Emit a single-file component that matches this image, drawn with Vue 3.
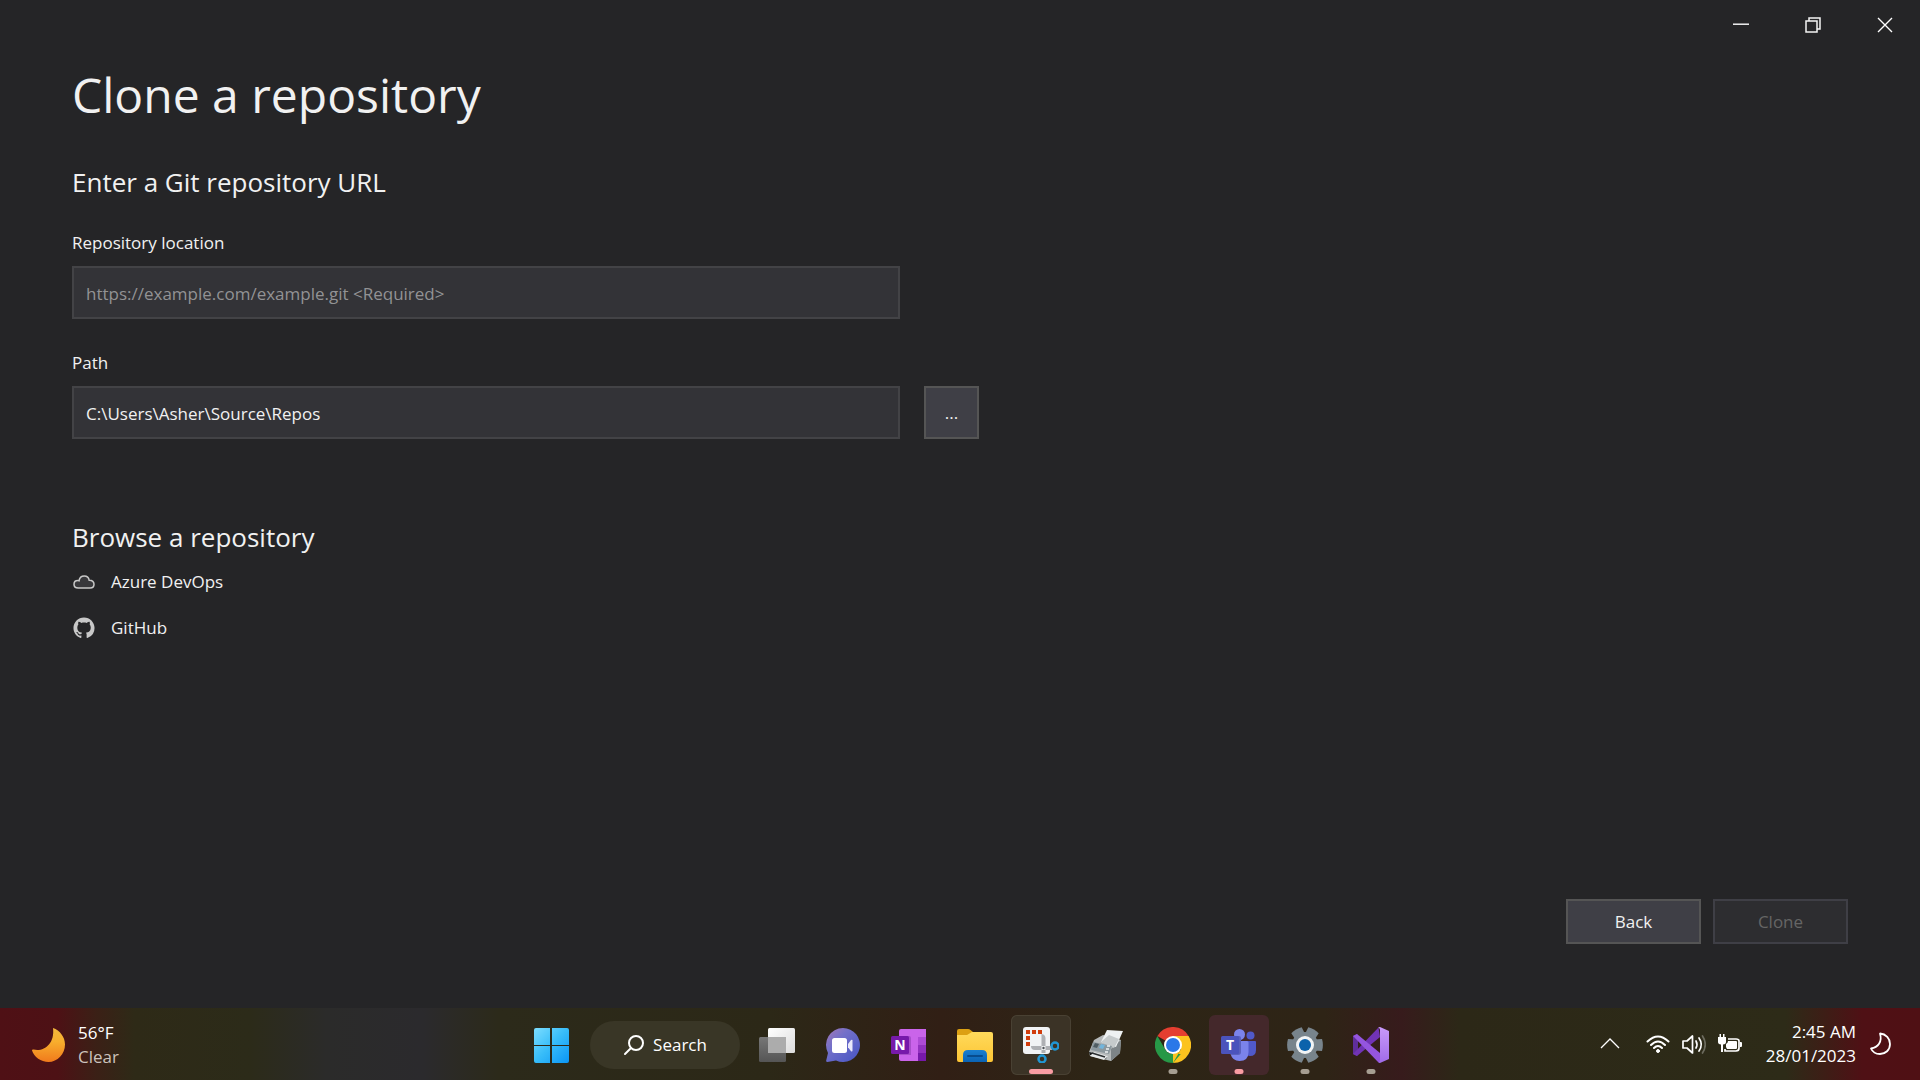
<script setup>
import { ref } from 'vue'

const repositoryUrl = ref('')
const path = ref('C:\\Users\\Asher\\Source\\Repos')

const gearTeeth = [0, 60, 120, 180, 240, 300]
</script>

<template>
  <div class="screen">
    <main class="window">
      <header class="titlebar">
        <button class="caption" aria-label="Minimize">
          <svg width="16" height="16" viewBox="0 0 16 16"><path d="M0 7.200h16" stroke="#fff" stroke-width="1.400" /></svg>
        </button>
        <button class="caption" aria-label="Restore">
          <svg width="16" height="16" viewBox="0 0 16 16" fill="none" stroke="#f4f4f4" stroke-width="1.5">
            <path d="M1 4h11v11H1zM4 4V1h11v11h-3" />
          </svg>
        </button>
        <button class="caption" aria-label="Close">
          <svg width="16" height="16" viewBox="0 0 16 16"><path d="M1 1l14 14M15 1L1 15" stroke="#fff" stroke-width="1.4" /></svg>
        </button>
      </header>

      <div class="content">
        <h1>Clone a repository</h1>
        <section>
          <h2>Enter a Git repository URL</h2>
          <div class="field">
            <label for="location">Repository location</label>
            <div class="row">
              <input id="location" v-model="repositoryUrl" type="text" placeholder="https://example.com/example.git <Required>" />
            </div>
          </div>
          <div class="field">
            <label for="path">Path</label>
            <div class="row">
              <input id="path" v-model="path" type="text" spellcheck="false" />
              <button class="button browse">...</button>
            </div>
          </div>
        </section>
        <section class="providers">
          <h2>Browse a repository</h2>
          <a href="#" class="provider">
            <svg width="24" height="24" viewBox="0 0 24 24">
              <path d="M6.2 18C3.500 18 2 16.300 2 14.200c0-2.200 1.700-3.700 3.900-3.700.5 0 .8.100 1.200.2C7.500 7.900 9.600 6 12.300 6c2.700 0 4.500 1.800 4.900 4.300 3.200-.1 4.800 1.700 4.800 3.900 0 2.200-1.500 3.800-3.900 3.800z" fill="#38383b" stroke="#c8c8c8" stroke-width="1.5" />
            </svg>
            Azure DevOps
          </a>
          <a href="#" class="provider">
            <svg width="24" height="24" viewBox="-1.100 -1.100 18.200 18.200">
              <path fill="#c8c8c8" d="M8 0C3.580 0 0 3.580 0 8c0 3.540 2.290 6.530 5.470 7.590.4.070.55-.17.55-.38 0-.19-.01-.82-.01-1.490-2.010.37-2.530-.49-2.690-.94-.09-.23-.48-.94-.82-1.130-.28-.15-.68-.52-.01-.53.63-.01 1.080.58 1.230.82.72 1.210 1.870.87 2.330.66.07-.52.28-.87.51-1.070-1.780-.2-3.640-.89-3.640-3.950 0-.87.31-1.590.82-2.150-.08-.2-.36-1.020.08-2.120 0 0 .67-.21 2.200.82.64-.18 1.320-.27 2-.27s1.360.09 2 .27c1.530-1.040 2.200-.82 2.200-.82.44 1.100.16 1.920.08 2.120.51.56.82 1.270.82 2.150 0 3.070-1.870 3.750-3.650 3.950.29.25.54.73.54 1.480 0 1.070-.01 1.930-.01 2.200 0 .21.15.46.55.38A8.010 8.010 0 0 0 16 8c0-4.420-3.580-8-8-8z" />
            </svg>
            GitHub
          </a>
        </section>
      </div>

      <footer class="actions">
        <button class="button">Back</button>
        <button class="button" disabled>Clone</button>
      </footer>
    </main>

    <nav class="taskbar" aria-label="Taskbar">
      <button class="weather">
        <svg width="36" height="36" viewBox="0 0 36 36">
          <defs>
            <linearGradient id="moon" x1="0" y1="0" x2="0" y2="1">
              <stop offset="0" stop-color="#f3b73d" /><stop offset=".4" stop-color="#f8ae2d" /><stop offset="1" stop-color="#f07a1c" />
            </linearGradient>
          </defs>
          <path d="M23 1C30 3.500 35 10 35 17.500 35 27 27.500 35 18.500 35 11 35 4 30 2 23.500c0-1 .8-1.300 1.600-.9C14 25 25 17 23 1z" fill="url(#moon)" />
        </svg>
        <span class="lines"><span>56°F</span><span class="muted">Clear</span></span>
      </button>

      <div class="apps">
        <button class="app" aria-label="Start">
          <svg width="36" height="36" viewBox="0 0 36 36">
            <defs>
              <linearGradient id="win" x1="0" y1="0" x2="36" y2="36" gradientUnits="userSpaceOnUse">
                <stop offset="0" stop-color="#80dfff" /><stop offset=".5" stop-color="#38bdf9" /><stop offset="1" stop-color="#0a95f5" />
              </linearGradient>
            </defs>
            <path d="M3 1h14v17H1V3q0-2 2-2zM19 1h15q2 0 2 2v15H19zM1 19h16v17H3q-2 0-2-2zM19 19h17v15q0 2-2 2H19z" fill="url(#win)" />
          </svg>
        </button>
        <button class="search">
          <svg width="22" height="22" viewBox="0 0 22 22" fill="none" stroke="#fff" stroke-width="2">
            <circle cx="13" cy="9" r="7" /><path d="M8 14l-6 6" stroke-linecap="round" />
          </svg>
          Search
        </button>
        <button class="app" aria-label="Task view">
          <svg width="36" height="36" viewBox="0 0 36 36">
            <defs>
              <linearGradient id="tvw" x1="0" y1="0" x2="1" y2="1"><stop offset="0" stop-color="#fff" /><stop offset="1" stop-color="#dcdcdc" /></linearGradient>
              <linearGradient id="tvg" x1="0" y1="0" x2="0" y2="1"><stop offset="0" stop-color="#777" /><stop offset="1" stop-color="#555" /></linearGradient>
            </defs>
            <rect x="9" y="1" width="27" height="25" rx="1.500" fill="url(#tvw)" />
            <rect x="0" y="10" width="27" height="25" rx="1.500" fill="url(#tvg)" />
            <path d="M9 10h18v16H9z" fill="#acacac" />
          </svg>
        </button>
        <button class="app" aria-label="Chat">
          <svg width="36" height="36" viewBox="0 0 36 36">
            <defs>
              <linearGradient id="chat" x1="0" y1="0" x2="1" y2="1"><stop offset="0" stop-color="#a477b4" /><stop offset=".35" stop-color="#7370c9" /><stop offset="1" stop-color="#4554c4" /></linearGradient>
            </defs>
            <path d="M18 1a17 17 0 1 1-7 32.500L2.500 35Q.8 35 1.200 33.500L3 26A17 17 0 0 1 18 1z" fill="url(#chat)" />
            <rect x="7" y="11" width="15" height="15" rx="2.500" fill="#fff" />
            <path d="M23 17l3-4q1.500-.8 1.500.5v10q0 1.500-1.500.7l-3-4z" fill="#e9e8fa" />
          </svg>
        </button>
        <button class="app" aria-label="OneNote">
          <svg width="36" height="36" viewBox="0 0 36 36">
            <path d="M8 4q0-2 2-2h25v32H10q-2 0-2-2z" fill="#ca64ea" />
            <path d="M27 10h8v8h-8z" fill="#ae4bd5" /><path d="M27 18h8v8h-8z" fill="#9332bf" /><path d="M27 26h8v8h-8z" fill="#7719aa" />
            <path d="M8 9h10q2 0 2 2v17H8z" fill="#a84fca" />
            <rect y="9" width="18" height="18" rx="1.500" fill="#7719aa" />
            <text x="9" y="23" text-anchor="middle" class="glyph">N</text>
          </svg>
        </button>
        <button class="app" aria-label="File Explorer">
          <svg width="36" height="36" viewBox="0 0 36 36">
            <defs>
              <linearGradient id="fold" x1="0" y1="0" x2="0" y2="1"><stop offset="0" stop-color="#ffda5b" /><stop offset="1" stop-color="#fdc534" /></linearGradient>
              <linearGradient id="tray" x1="0" y1="0" x2="0" y2="1"><stop offset="0" stop-color="#1a7fd0" /><stop offset="1" stop-color="#0b63b4" /></linearGradient>
            </defs>
            <path d="M0 4q0-2 2-2h9q1.500 0 2.500 1L16 5v5H0z" fill="#dca013" />
            <path d="M0 10V8h10l5-3h19q2 0 2 2v26q0 2-2 2H2q-2 0-2-2z" fill="url(#fold)" />
            <path d="M6 35v-7q0-5 5-5h14q5 0 5 5v7z" fill="url(#tray)" />
            <path d="M11 29h14" stroke="#084c8e" stroke-width="2" stroke-linecap="round" />
          </svg>
        </button>
        <button class="app active" aria-label="Snipping Tool">
          <svg width="36" height="36" viewBox="0 0 36 36">
            <rect width="27" height="27" rx="3" fill="#f1f3f5" />
            <path d="M3 3h4v4H3zM9 3h4v4H9zM15 3h4v4h-4zM3 9h4v4H3zM3 15h4v4H3z" fill="#d13c0c" />
            <path d="M18 7q4 0 4.500 4v15h-4V7zM8 19q0 4 4 4h17v-4z" fill="#aeb0b4" />
            <circle cx="20.500" cy="21" r="1.200" fill="#505458" />
            <g fill="none" stroke="#2196d3" stroke-width="2.500"><circle cx="32" cy="19" r="3.500" /><circle cx="19" cy="32" r="3.500" /></g>
          </svg>
          <i class="indicator wide"></i>
        </button>
        <button class="app" aria-label="Fax and Scan">
          <svg width="36" height="36" viewBox="0 0 36 36">
            <path d="M0 25l5-12 9-5 18 5-1 13-9 8L1 29z" fill="#b6babb" />
            <path d="M22 22l10-9-1 13-9 8z" fill="#7d8487" />
            <path d="M12 15l6-12 16 1-7 16z" fill="#eef1f2" />
            <path d="M12 15l8-7 10 4-5 9z" fill="#c5cacb" />
            <path d="M4 15l19 4-3 8-18-4z" fill="#8c989e" />
            <path d="M6 16l4 1-2 4-4-1z" fill="#505d63" />
            <path d="M12 17l4 1-2 4-4-1z" fill="#73b5db" />
            <path d="M18 19h3m-4 3h3m-4 3h3" stroke="#eef1f2" stroke-width="1.500" />
            <path d="M0 25l18 4-1 3L1 28z" fill="#17191a" />
            <path d="M5 25l14 4-4 4L1 29z" fill="#e6e9ea" />
            <path d="M3 26l13 4" stroke="#2b2f31" stroke-width="1.500" />
          </svg>
        </button>
        <button class="app" aria-label="Chrome">
          <svg width="36" height="36" viewBox="0 0 36 36">
            <path d="M18 18L2.400 9A18 18 0 0 1 33.600 9z" fill="#e43e30" />
            <path d="M18 9h15.600A18 18 0 0 1 18 36l8-14z" fill="#fcc31e" />
            <path d="M2.400 9L10.200 22.500Q13 27 18 27h7.800L18 36A18 18 0 0 1 2.400 9z" fill="#279847" />
            <path d="M18 36l7.800-13.500L18 27z" fill="#fcc31e" />
            <circle cx="18" cy="18" r="9" fill="#fff" /><circle cx="18" cy="18" r="7" fill="#2b78e8" />
          </svg>
          <i class="indicator"></i>
        </button>
        <button class="app attention" aria-label="Teams">
          <svg width="36" height="36" viewBox="0 0 36 36">
            <circle cx="29.500" cy="8.500" r="4" fill="#5059c9" />
            <path d="M24 14h10q1 0 1 1v8q0 6-6 6-3 0-5-2z" fill="#5059c9" />
            <circle cx="18.500" cy="7.500" r="5.500" fill="#7b83eb" />
            <path d="M11 14h15q1.500 0 1.500 1.500V25q0 9-9 9-7 0-9-7z" fill="#7b83eb" />
            <path d="M14 9h4q2 0 2 2v14q0 3-3 3h-7z" fill="#5a61bd" />
            <rect y="9" width="18" height="18" rx="1.500" fill="#4b53bc" />
            <text x="9" y="23" text-anchor="middle" class="glyph">T</text>
          </svg>
          <i class="indicator pink"></i>
        </button>
        <button class="app" aria-label="Settings">
          <svg width="36" height="36" viewBox="0 0 36 36">
            <g fill="#78848c">
              <path v-for="angle in gearTeeth" :key="angle" d="M27 12.500l8-.5q1.800 6 0 12l-8-.5z" :transform="`rotate(${angle} 18 18)`" />
              <circle cx="18" cy="18" r="13" />
            </g>
            <circle cx="18" cy="18" r="9" fill="#f2f4f5" /><circle cx="18" cy="18" r="6" fill="#0c62ab" />
          </svg>
          <i class="indicator"></i>
        </button>
        <button class="app" aria-label="Visual Studio">
          <svg width="36" height="36" viewBox="0 0 36 36">
            <defs>
              <linearGradient id="vs" x1="0" y1="0" x2="0" y2="1"><stop offset="0" stop-color="#c99afa" /><stop offset="1" stop-color="#a06be8" /></linearGradient>
            </defs>
            <path d="M0 9l4-2 1 2v18l-1 2-4-2z" fill="#5f2e9c" />
            <path d="M0 27l25.500-26.500L27 10 4 29z" fill="#7133b5" />
            <path d="M0 9l4-2 23 19v9.500l-2-.5z" fill="#9455df" />
            <path d="M27 0l9 4v28l-9 4q-1 0-2-1 2 .5 2-2V3q0-2.500-2-2 1-1 2-1z" fill="url(#vs)" />
          </svg>
          <i class="indicator"></i>
        </button>
      </div>

      <div class="tray">
        <button class="status" aria-label="Show hidden icons">
          <svg width="24" height="24" viewBox="0 0 24 24"><path d="M3 16l9-9 9 9" fill="none" stroke="#fff" stroke-width="1.300" /></svg>
        </button>
        <button class="status" aria-label="Network, volume and battery">
          <svg width="24" height="24" viewBox="0 0 24 24" fill="none" stroke="#fff" stroke-width="2" stroke-linecap="round">
            <path d="M1.500 9.500Q12-.5 22.500 9.500M5 13q7-7 14 0M8 16q4-4 8 0" /><circle cx="12" cy="19" r="1.500" fill="#fff" stroke-width="1" />
          </svg>
          <svg width="24" height="24" viewBox="0 0 24 24" fill="none" stroke="#fff" stroke-width="1.700" stroke-linecap="round" stroke-linejoin="round">
            <path d="M1 9h4l5.500-5v17L5 16H1zM14 9q2 3.500 0 7M17 6q4.500 6.500 0 13" /><path d="M20.500 4q5.500 8.500 0 17" opacity=".3" />
          </svg>
          <svg width="24" height="24" viewBox="0 0 24 24">
            <path d="M7 17v2h11q3 0 3-3V9q0-2-3-2h-8" fill="none" stroke="#fff" stroke-width="1.700" />
            <path d="M10 9h8q1 0 1 1v6q0 1-1 1H9l-1-2v-3q2-1 2-3zM22 10h1q1 0 1 1v3q0 1-1 1h-1z" fill="#fff" />
            <path d="M0 5h8v5q0 2-3 2.500V20H3v-7.500Q0 12 0 10zM1.500 2h1.500v3H1.500zM5 2h1.500v3H5z" fill="#fff" />
          </svg>
        </button>
        <button class="clock">
          <span class="lines"><span>2:45 AM</span><span>28/01/2023</span></span>
          <svg width="24" height="24" viewBox="0 0 24 24">
            <path d="M12 1.500C18 2 22 6.500 22 12c0 6-4.500 10-10 10-4 0-7.500-2-9-5.500C10 15.500 14.500 10 12 1.500z" fill="none" stroke="#fff" stroke-width="1.800" stroke-linejoin="round" />
          </svg>
        </button>
      </div>
    </nav>
  </div>
</template>

<style>
body {
  margin: 0;
  background: #252527;
}
</style>

<style scoped>
.screen {
  display: flex;
  flex-direction: column;
  min-height: 100vh;
  background: #252527;
  color: #f1f1f1;
  font-family: "Open Sans", "Noto Sans", sans-serif;
  font-size: 17px;
  line-height: 24px;
}
button,
input {
  box-sizing: border-box;
  margin: 0;
  padding: 0;
  border: 0;
  background: none;
  color: inherit;
  font: inherit;
}
svg {
  display: block;
  flex: none;
}
.window {
  display: flex;
  flex: 1;
  flex-direction: column;
}
.titlebar {
  display: flex;
  justify-content: flex-end;
}
.caption {
  display: grid;
  place-items: center;
  width: 72px;
  height: 50px;
  padding-left: 2px;
}
.content {
  flex: 1;
  padding: 9px 72px 0;
}
h1,
h2 {
  margin: 0;
  font-weight: 400;
}
h1 {
  font-size: 48px;
  line-height: 72px;
}
h2 {
  font-size: 26px;
  line-height: 36px;
}
section {
  margin-top: 33px;
}
.field {
  margin-top: 31px;
}
.field + .field {
  margin-top: 32px;
}
label {
  display: block;
  margin-bottom: 11px;
}
.row {
  display: flex;
  gap: 24px;
}
input {
  flex: 0 1 828px;
  min-width: 0;
  height: 53px;
  padding: 1px 12px 0;
  border: 2px solid #434346;
  background: #333337;
}
input::placeholder {
  color: #929294;
  opacity: 1;
}
.providers {
  margin-top: 80px;
}
.provider {
  display: flex;
  align-items: center;
  gap: 15px;
  width: fit-content;
  margin-top: 22px;
  color: inherit;
  text-decoration: none;
}
h2 + .provider {
  margin-top: 15px;
}
.button {
  width: 135px;
  height: 45px;
  border: 2px solid #555555;
  background: #3f3f46;
}
.button:disabled {
  border-color: #3f3f46;
  background: #2d2d30;
  color: #656565;
}
.browse {
  width: 55px;
  height: 53px;
}
.actions {
  display: flex;
  justify-content: flex-end;
  gap: 12px;
  padding: 0 72px 64px;
}
.taskbar {
  display: grid;
  grid-template-columns: 1fr auto 1fr;
  align-items: center;
  height: 72px;
  color: #fff;
  background: linear-gradient(90deg, #4f1015 0%, #4d1115 3%, #3b2016 5%, #2e2a17 7%, #2c2b19 13%, #2b2b2a 17%, #2b2a2d 22%, #2c2a1a 26%, #2c2817 40%, #311f15 49%, #2d2516 57%, #2e2416 69%, #371b1c 73%, #2c2817 76%, #2d2b18 93%, #3d1e16 95%, #4f1015 97%, #4f1014 100%);
}
.weather {
  display: flex;
  align-items: center;
  justify-self: start;
  gap: 12px;
  padding: 2px 0 0 30px;
  text-align: left;
}
.lines {
  display: flex;
  flex-direction: column;
}
.muted {
  color: #ccc2bd;
}
.apps {
  display: flex;
  align-items: center;
  gap: 6px;
  padding: 2px 0 0 2px;
}
.app {
  position: relative;
  display: grid;
  place-items: center;
  width: 60px;
  height: 60px;
  border-radius: 6px;
}
.active {
  background: #3b3326;
  box-shadow: inset 0 0 0 1px #494133;
}
.attention {
  background: #44282b;
}
.indicator {
  position: absolute;
  bottom: 1px;
  left: 50%;
  width: 9px;
  height: 5px;
  border-radius: 3px;
  background: #a69e92;
  transform: translateX(-50%);
}
.wide {
  width: 24px;
  background: #f99ca3;
}
.pink {
  background: #f99ca3;
}
.glyph {
  fill: #fff;
  font-size: 14px;
  font-weight: 700;
}
.search {
  display: flex;
  align-items: center;
  justify-content: center;
  gap: 8px;
  width: 150px;
  height: 48px;
  margin: 0 1px 0 3px;
  border-radius: 24px;
  background: #393626;
}
.tray {
  display: flex;
  align-items: center;
  justify-self: end;
  gap: 24px;
  padding-right: 28px;
}
.status {
  display: flex;
  gap: 12px;
}
.clock {
  display: flex;
  align-items: center;
  gap: 12px;
  text-align: right;
}
</style>
